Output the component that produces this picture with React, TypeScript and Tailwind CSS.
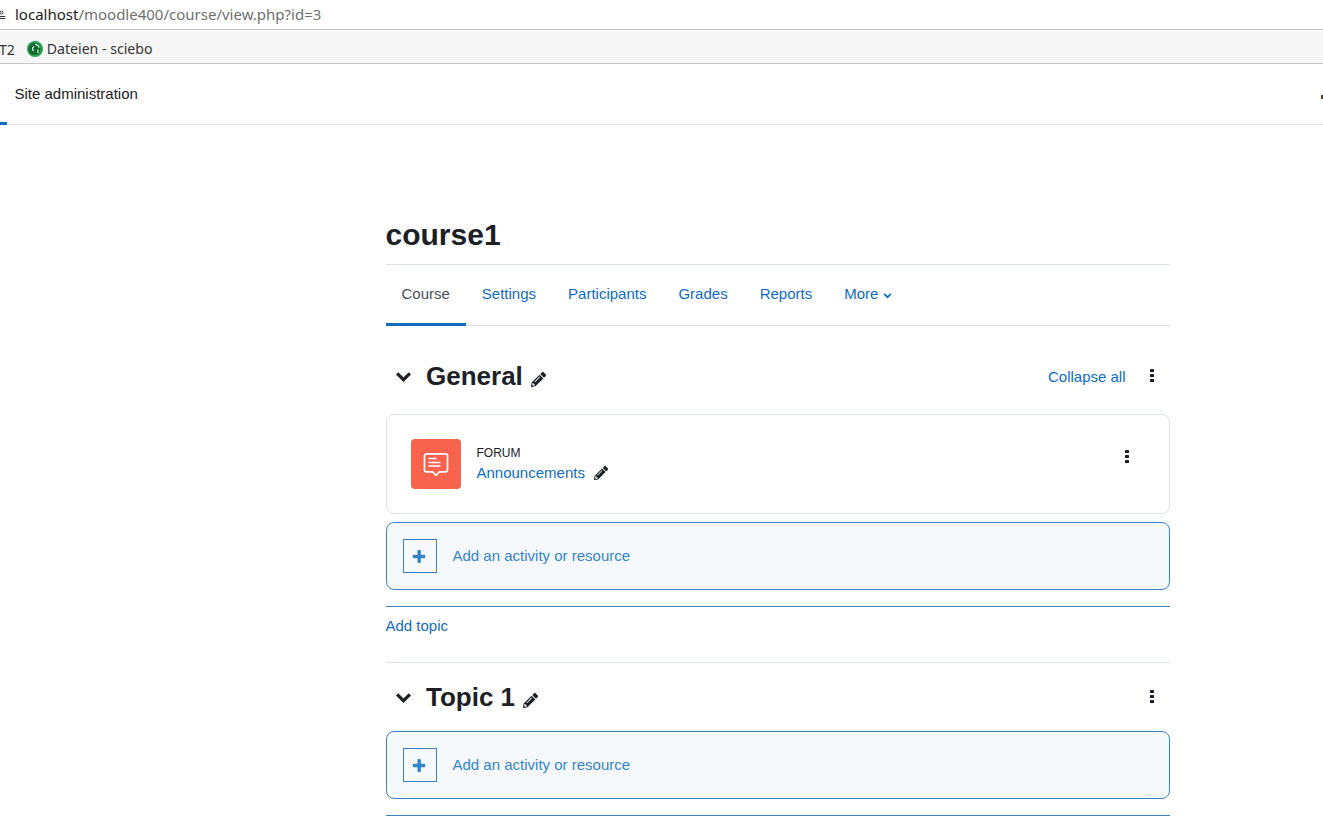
import React from 'react';
import { FaPencilAlt } from 'react-icons/fa';

const tabs = ['Course', 'Settings', 'Participants', 'Grades', 'Reports'];

function ScieboIcon() {
  return (
    <svg width="16" height="16" viewBox="0 0 16 16" className="shrink-0">
      <circle cx="8" cy="8" r="8" fill="#2aa053" />
      <circle cx="7.5" cy="8" r="6" fill="#0b6a2c" />
      <path d="M8 3.5a4.5 4.5 0 0 1 4.2 3.2M11 8.5v3.5M7 5.5a2.5 2.5 0 0 0 0 4.5" stroke="#fff" strokeWidth="1.1" fill="none" />
    </svg>
  );
}

function ForumIcon() {
  return (
    <div className="flex h-[50px] w-[50px] shrink-0 items-center justify-center rounded-[4px] bg-[#f7634d]">
      <svg width="26" height="26" viewBox="0 0 26 26" fill="none" stroke="#fff" className="mt-[1px]">
        <path
          d="M3.5 1.8h19a2 2 0 0 1 2 2v14a2 2 0 0 1-2 2h-6l-3.5 3.5-3.5-3.5h-6a2 2 0 0 1-2-2v-14a2 2 0 0 1 2-2z"
          strokeWidth="1.7"
        />
        <path d="M5.5 6.5h8M5.5 10.5h12M5.5 14h12" strokeWidth="1.7" />
      </svg>
    </div>
  );
}

function Chevron({ size, className }: { size: number; className?: string }) {
  return (
    <svg width={size} height={size} viewBox="0 0 16 16" fill="none" stroke="currentColor" strokeWidth="3" className={className}>
      <path d="M2 5l6 6 6-6" />
    </svg>
  );
}

function AddResource() {
  return (
    <div className="flex h-[68px] items-center rounded-lg border border-[#3a84c6] bg-[#f5f9fc] pl-4 text-[#3584c9]">
      <div className="flex h-[34px] w-[34px] items-center justify-center border border-[#3a84c6]">
        <svg width="13" height="13" viewBox="0 0 13 13" fill="#3584c9" className="translate-x-[-0.5px]">
          <rect x="5" y="0" width="3.4" height="13" rx="1" />
          <rect x="0" y="4.8" width="13" height="3.4" rx="1" />
        </svg>
      </div>
      <span className="ml-[16px]">Add an activity or resource</span>
    </div>
  );
}

function Dots({ className }: { className?: string }) {
  return (
    <svg width="4" height="13" viewBox="0 0 4 13" fill="#1d2125" className={className}>
      <rect y="0" width="4" height="3" rx="0.6" />
      <rect y="5" width="4" height="3" rx="0.6" />
      <rect y="10" width="4" height="3" rx="0.6" />
    </svg>
  );
}

export default function App() {
  return (
    <div className="h-[821px] w-[1323px] overflow-hidden bg-white font-['Liberation_Sans',sans-serif] text-[15px] text-[#1d2125]">
      {/* browser chrome */}
      <div className="flex h-[30px] items-center border-b border-[#c4c4c4] font-['Noto_Sans',sans-serif] text-[15px]">
        <svg width="5" height="10" viewBox="0 0 5 10" className="shrink-0" fill="none" stroke="#333">
          <circle cx="1.5" cy="2.5" r="1.5" />
          <path d="M0 6.5h5M0 8.5h5" />
        </svg>
        <span className="ml-[10px] text-[#1c1c1c]">localhost</span>
        <span className="text-[#6f6f6f]">/moodle400/course/view.php?id=3</span>
      </div>
      <div className="flex h-[34px] items-center border-b border-[#c4c4c4] bg-[#f7f7f7] pt-[5px] font-['Noto_Sans',sans-serif] text-[14px] text-[#333]">
        <span className="ml-[-1px]">T2</span>
        <span className="ml-[12px]">
          <ScieboIcon />
        </span>
        <span className="ml-[4px] text-[14.1px]">Dateien - sciebo</span>
      </div>

      {/* moodle top bar */}
      <div className="relative flex h-[61px] items-center justify-between border-b border-[#dee2e6] pl-[15px]">
        <span className="translate-x-[-0.5px]">Site administration</span>
        <div className="h-[4px] w-[2px] translate-y-[3px] bg-[#55442f]" />
        <div className="absolute bottom-[-1px] left-0 h-[3px] w-[7px] bg-[#0f6cbf]" />
      </div>

      {/* course content */}
      <div className="ml-[385.5px] w-[784.5px]">
        <h1 className="mt-[92px] text-[30px] leading-[36px] font-bold">course1</h1>
        <nav className="mt-[11px] flex h-[62px] border-y border-[#dee2e6] text-[#0f6cbf]">
          {tabs.map((tab, i) => (
            <a
              key={tab}
              className={
                i === 0
                  ? 'mb-[-1px] flex items-center border-b-[3px] border-[#0f6cbf] px-4 text-[#495057]'
                  : 'flex items-center px-4 pb-[1px]'
              }
            >
              {tab}
            </a>
          ))}
          <a className="flex items-center gap-[5px] px-4 pb-[1px]">
            More
            <Chevron size={9} className="mt-[1px]" />
          </a>
        </nav>

        <section className="mt-[26px] flex h-[48px] items-center">
          <Chevron size={17} className="ml-[9.5px]" />
          <h2 className="ml-[14px] text-[26px] font-bold">General</h2>
          <FaPencilAlt size={15} className="mt-[7px] ml-2" />
          <a className="mt-[2px] mr-[24px] ml-auto text-[#0f6cbf]">Collapse all</a>
          <Dots className="mr-[16.5px] mb-[2px]" />
        </section>

        <div className="mt-[14px] flex h-[100px] items-start rounded-lg border border-[#dee2e6] pt-[24px] pl-[24px]">
          <ForumIcon />
          <div className="ml-[16px] pt-[6px]">
            <div className="text-[12px] leading-[16px]">FORUM</div>
            <div className="mt-[1px] flex items-center text-[#0f6cbf]">
              Announcements
              <FaPencilAlt size={14} className="ml-[9px] text-[#1d2125]" />
            </div>
          </div>
          <Dots className="mt-[11px] mr-[40.5px] ml-auto" />
        </div>

        <div className="mt-2">
          <AddResource />
        </div>
        <div className="mt-4 border-t border-[#3a84c6]" />
        <a className="mt-[7px] block leading-[23px] text-[#0f6cbf]">Add topic</a>
        <div className="mt-[25px] border-t border-[#dee2e6]" />

        <section className="mt-[10px] flex h-[48px] items-center">
          <Chevron size={17} className="ml-[9.5px]" />
          <h2 className="ml-[14px] text-[26px] font-bold">Topic 1</h2>
          <FaPencilAlt size={15} className="mt-[7px] ml-2" />
          <Dots className="mr-[16.5px] mb-[2px] ml-auto" />
        </section>

        <div className="mt-[10px]">
          <AddResource />
        </div>
        <div className="mt-4 border-t border-[#3a84c6]" />
      </div>
    </div>
  );
}
